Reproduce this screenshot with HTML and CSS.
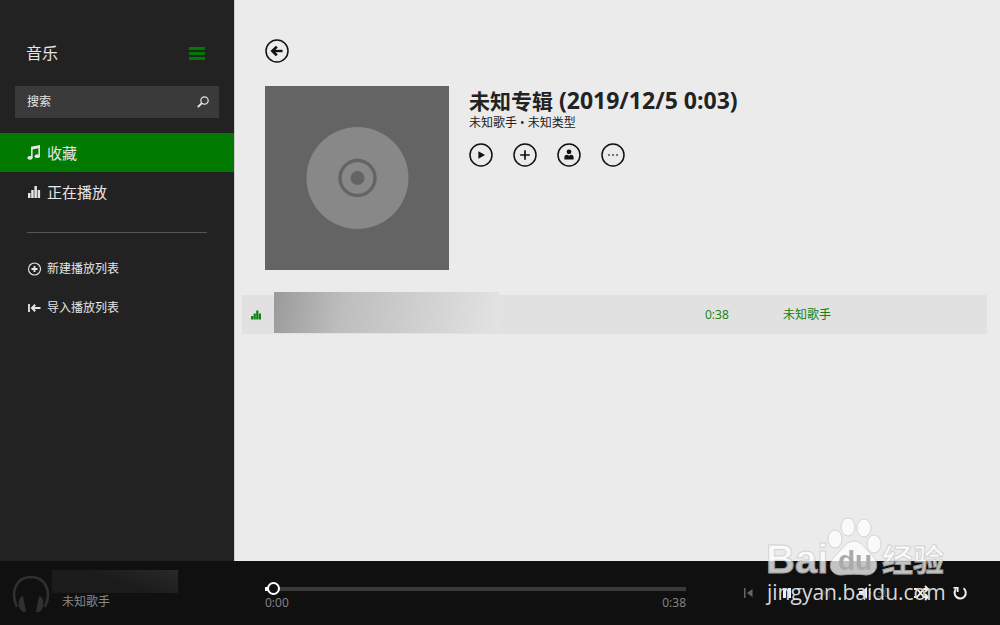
FILE: index.html
```html
<!DOCTYPE html>
<html lang="zh-CN">
<head>
    <meta charset="UTF-8">
    <meta name="viewport" content="width=device-width, initial-scale=1.0">
    <title>音乐</title>
    <link rel="stylesheet" href="styles.css">
</head>
<body>
    <div class="app">
        <aside class="sidebar">
            <div class="sidebar-head">
                <h1>音乐</h1>
                <button class="menu-btn" aria-label="菜单">
                    <svg width="16" height="13" viewBox="0 0 16 13"><path d="M0 1.5h16M0 6.5h16M0 11.5h16" stroke="currentColor" stroke-width="2.8"/></svg>
                </button>
            </div>
            <form class="search">
                <input type="text" placeholder="搜索" aria-label="搜索">
                <button type="button" aria-label="开始搜索">
                    <svg width="12" height="12" viewBox="0 0 12 12" fill="none" stroke="currentColor"><circle cx="7.5" cy="4.5" r="3.7" stroke-width="1.2"/><path d="M4.8 7.2L.8 11.2" stroke-width="1.9"/></svg>
                </button>
            </form>
            <nav class="nav">
                <a href="#" class="active">
                    <svg width="14" height="15" viewBox="0 0 14 15" fill="currentColor"><path d="M4 1.8L13 0v11.2h-1.600V3.200l-5.800 1.200v8.400H4z"/><ellipse cx="3" cy="12.800" rx="2.700" ry="1.900"/><ellipse cx="10.300" cy="11.200" rx="2.700" ry="1.900"/></svg>
                    收藏
                </a>
                <a href="#">
                    <svg width="14" height="12" viewBox="0 0 14 12" fill="currentColor"><path d="M1 7h2.500v5H1zM4.200 4h2.500v8H4.200zM7.400 0h2.500v12H7.400zM10.600 4h2.500v8h-2.500z"/></svg>
                    正在播放
                </a>
            </nav>
            <hr>
            <nav class="nav playlists">
                <a href="#">
                    <svg width="14" height="14" viewBox="0 0 14 14" fill="none" stroke="currentColor"><circle cx="7.500" cy="7" r="6" stroke-width="1.100"/><path d="M7.500 4v6M4.500 7h6" stroke-width="1.800"/></svg>
                    新建播放列表
                </a>
                <a href="#">
                    <svg width="14" height="8" viewBox="0 0 14 8" fill="none" stroke="currentColor"><path d="M2 0v8" stroke-width="1.800"/><path d="M13.500 4H6" stroke-width="2"/><path d="M8.200 .8L5 4l3.200 3.200" stroke-width="2"/></svg>
                    导入播放列表
                </a>
            </nav>
        </aside>

        <main class="content">
            <button class="round back" aria-label="返回">
                <svg width="24" height="24" viewBox="0 0 24 24" fill="none" stroke="currentColor"><circle cx="12" cy="12" r="11" stroke-width="1.500"/><path d="M17.500 12H8" stroke-width="2.400"/><path d="M11.800 7.600L7.400 12l4.400 4.400" stroke-width="2.700"/></svg>
            </button>
            <section class="album">
                <svg class="cover" viewBox="0 0 184 184"><rect width="184" height="184" fill="#646464"/><circle cx="92.500" cy="92" r="51" fill="#888"/><circle cx="92.500" cy="92" r="17.500" fill="none" stroke="#646464" stroke-width="3.400"/><circle cx="92.500" cy="92" r="7" fill="#646464"/></svg>
                <div class="album-info">
                    <h2>未知专辑<span> (2019/12/5 0:03)</span></h2>
                    <p>未知歌手 • 未知类型</p>
                    <div class="actions">
                        <button class="round" aria-label="播放">
                            <svg width="24" height="24" viewBox="0 0 24 24"><circle cx="12" cy="12" r="11" fill="none" stroke="currentColor" stroke-width="1.500"/><path d="M9.400 8.300l6.600 3.700-6.600 3.700z" fill="currentColor"/></svg>
                        </button>
                        <button class="round" aria-label="添加">
                            <svg width="24" height="24" viewBox="0 0 24 24" fill="none" stroke="currentColor"><circle cx="12" cy="12" r="11" stroke-width="1.500"/><path d="M12 7.200v9.600M7.200 12h9.600" stroke-width="1.700"/></svg>
                        </button>
                        <button class="round" aria-label="歌手">
                            <svg width="24" height="24" viewBox="0 0 24 24" fill="currentColor"><circle cx="12" cy="12" r="11" fill="none" stroke="currentColor" stroke-width="1.500"/><circle cx="12" cy="8.800" r="2.400"/><path d="M7.400 16.600v-2.400c0-1.600 1-2.500 2.600-2.500l2 1.100 2-1.100c1.600 0 2.600.9 2.600 2.500v2.400z"/></svg>
                        </button>
                        <button class="round" aria-label="更多">
                            <svg width="24" height="24" viewBox="0 0 24 24" fill="currentColor"><circle cx="12" cy="12" r="11" fill="none" stroke="currentColor" stroke-width="1.500"/><path d="M7.300 11.300h1.400v1.400H7.300zM11.300 11.300h1.400v1.400h-1.400zM15.300 11.300h1.400v1.400h-1.400z"/></svg>
                        </button>
                    </div>
                </div>
            </section>
            <div class="track">
                <svg width="12" height="10" viewBox="0 0 12 10" fill="currentColor"><path d="M0 6h2.200v3.500H0zM2.600 3.500h2.200v6H2.600zM5.200 .5h2.200v9H5.200zM7.800 3.500H10v6H7.800z"/></svg>
                <span class="track-title"></span>
                <span>0:38</span>
                <span>未知歌手</span>
            </div>
        </main>
    </div>

    <footer class="player">
        <div class="now">
            <svg width="38" height="38" viewBox="0 0 38 38"><path d="M5 33C-2 18 4 3 19 3s21 15 14 30" fill="none" stroke="#303030" stroke-width="2.600"/><path d="M11 22c-6 1-6 13 0 16h3zM27 22c6 1 6 13 0 16h-3z" fill="#303030"/></svg>
            <div class="now-info">
                <span class="now-title"></span>
                <span class="now-artist">未知歌手</span>
            </div>
        </div>
        <div class="progress">
            <input type="range" min="0" max="100" value="0" aria-label="播放进度">
            <div class="times"><span>0:00</span><span>0:38</span></div>
        </div>
        <div class="controls">
            <button class="dim" aria-label="上一首">
                <svg width="16" height="16" viewBox="0 0 16 16" fill="currentColor"><path d="M4 3h1.500v10H4zM12.500 4v8L7 8z"/></svg>
            </button>
            <button aria-label="暂停">
                <svg width="16" height="16" viewBox="0 0 16 16" fill="currentColor"><path d="M4 3h3v10H4zM9 3h3v10H9z"/></svg>
            </button>
            <button class="dim faint" aria-label="下一首">
                <svg width="16" height="16" viewBox="0 0 16 16" fill="currentColor"><path d="M4 4v8l5-4zM10.500 3H12v10h-1.500z"/></svg>
            </button>
            <button class="volume" aria-label="音量">
                <svg width="16" height="16" viewBox="0 0 16 16" fill="currentColor"><path d="M2 6h3l5-4v12l-5-4H2z"/><path d="M12 5q2 3 0 6" fill="none" stroke="currentColor"/></svg>
                <span>30</span>
            </button>
            <button aria-label="随机播放">
                <svg width="16" height="16" viewBox="0 0 16 16" fill="none" stroke="currentColor" stroke-width="1.800"><path d="M1 4h3l7 8h4M1 12h3l7-8h4M12 1l3 3-3 3M12 9l3 3-3 3"/></svg>
            </button>
            <button aria-label="重复播放">
                <svg width="16" height="16" viewBox="0 0 16 16" fill="none" stroke="currentColor" stroke-width="2"><path d="M11.500 3.300a5.600 5.600 0 1 1-7.500.8"/><path d="M1.500 2.800h4.200v4.200" stroke-width="1.800"/></svg>
            </button>
        </div>
    </footer>

    <div class="watermark">
        <svg width="180" height="62" viewBox="0 0 180 62">
            <g class="mark">
                <ellipse cx="68" cy="22" rx="7" ry="9"/>
                <ellipse cx="81" cy="10" rx="7" ry="9"/>
                <ellipse cx="97" cy="11" rx="7" ry="9"/>
                <ellipse cx="107" cy="27" rx="7" ry="9"/>
                <path d="M87 24c8 0 11 8 17 13 10 9 6 21-5 21-8-1-16-1-24 0-12 1-16-12-6-20 7-6 10-14 18-14z"/>
                <text x="-1" y="56" class="bai">Bai</text>
                <text x="115" y="54" class="jingyan">经验</text>
            </g>
            <text x="71" y="53" class="du">du</text>
        </svg>
        <span>jingyan.baidu.com</span>
    </div>
</body>
</html>
```

FILE: styles.css
```css
* {
    margin: 0;
    padding: 0;
    box-sizing: border-box;
}

body {
    height: 100vh;
    display: flex;
    flex-direction: column;
    position: relative;
    font-family: "Open Sans", "Noto Sans CJK SC", sans-serif;
    font-size: 12px;
    line-height: 16px;
    background: #ebebeb;
    color: #222;
    overflow: hidden;
}

button {
    border: none;
    background: none;
    color: inherit;
    font: inherit;
    cursor: pointer;
    display: flex;
    align-items: center;
}

a {
    color: inherit;
    text-decoration: none;
}

.app {
    flex: 1;
    display: flex;
    min-height: 0;
}

/* sidebar */
.sidebar {
    width: 235px;
    flex-shrink: 0;
    background: #222;
    color: #e6e6e6;
    border-right: 1px solid #ccc;
}

.sidebar-head {
    display: flex;
    justify-content: space-between;
    align-items: center;
    padding: 41px 29px 0 26px;
}

.sidebar-head h1 {
    font-size: 16px;
    line-height: 24px;
    font-weight: 400;
}

.menu-btn {
    color: #007a00;
}

.search {
    display: flex;
    align-items: center;
    height: 32px;
    margin: 21px 15px 15px;
    padding: 0 10px 0 12px;
    background: #3a3a3a;
}

.search input {
    flex: 1;
    min-width: 0;
    border: none;
    outline: none;
    background: none;
    color: #e6e6e6;
    font: inherit;
}

.search input::placeholder {
    color: #e6e6e6;
}

.nav a {
    display: flex;
    align-items: center;
    gap: 6px;
    height: 39px;
    padding-left: 27px;
    font-size: 15px;
}

.nav svg {
    width: 14px;
}

.nav .active {
    background: #007a00;
}

.sidebar hr {
    border: none;
    border-top: 1px solid #555;
    margin: 21px 27px 16px;
}

.playlists a {
    font-size: 12px;
}

/* album page */
.content {
    flex: 1;
    min-width: 0;
    padding: 39px 13px 0 7px;
}

.round {
    color: #111;
}

.back {
    margin-left: 23px;
}

.album {
    display: flex;
    gap: 20px;
    margin: 23px 0 25px 23px;
}

.cover {
    width: 184px;
    height: 184px;
    flex-shrink: 0;
}

.album-info h2 {
    font-size: 21px;
    line-height: 28px;
}

.album-info h2 span {
    font-size: 23px;
}

.album-info p {
    line-height: 16px;
}

.actions {
    display: flex;
    gap: 20px;
    margin-top: 12px;
}

.track {
    display: grid;
    grid-template-columns: 23px 431fr 78px 204px;
    align-items: center;
    height: 39px;
    padding-left: 9px;
    background: #e1e1e1;
    color: #108010;
}

.track-title {
    width: 225px;
    height: 41px;
    margin-top: -4px;
    background: linear-gradient(100deg, #9a9a9a, #bdbdbd 30%, #d0d0d0 65%, #e3e3e3);
}

/* player bar */
.player {
    display: grid;
    grid-template-columns: 265px 1fr 314px;
    height: 64px;
    background: #101010;
    color: #888;
}

.now {
    display: flex;
    padding: 9px 0 0 12px;
    gap: 2px;
}

.now > svg {
    margin-top: 4px;
}

.now-info {
    display: flex;
    flex-direction: column;
    gap: 1px;
}

.now-title {
    width: 126px;
    height: 23px;
    background: linear-gradient(20deg, #1b1b1b 50%, #292929);
}

.now-artist {
    padding-left: 10px;
}

.progress {
    padding-top: 21px;
}

.progress input {
    display: block;
    width: 100%;
    height: 13px;
    appearance: none;
    background:
        linear-gradient(#fff, #fff) left / 4px 4px no-repeat,
        linear-gradient(#3a3a3a, #3a3a3a) center / 100% 4px no-repeat;
    padding-left: 2px;
}

.progress input::-webkit-slider-thumb {
    appearance: none;
    width: 13px;
    height: 13px;
    border: 2px solid #fff;
    border-radius: 50%;
    background: #101010;
}

.times {
    display: flex;
    justify-content: space-between;
}

.controls {
    display: flex;
    align-items: center;
    justify-content: space-between;
    padding: 0 32px 0 54px;
    color: #f0f0f0;
}

.controls .dim {
    color: #666;
}

.controls .faint {
    color: #333;
}

.volume {
    gap: 4px;
}

.volume span {
    color: #555;
}

/* site mark over the page */
.watermark {
    position: absolute;
    right: 53px;
    bottom: 20px;
    width: 180px;
    color: #d8d8d8;
    font-size: 21px;
    line-height: 26px;
    pointer-events: none;
}

.watermark svg {
    display: block;
    overflow: visible;
}

.mark {
    fill: #fff;
    stroke: #ccc;
    stroke-width: 1;
    opacity: 0.75;
}

.bai {
    font: bold 40px "Liberation Sans", sans-serif;
}

.du {
    font: bold 28px "Liberation Sans", sans-serif;
    fill: #aaa;
}

.jingyan {
    font: bold 31px "Noto Sans CJK SC", sans-serif;
}
```
